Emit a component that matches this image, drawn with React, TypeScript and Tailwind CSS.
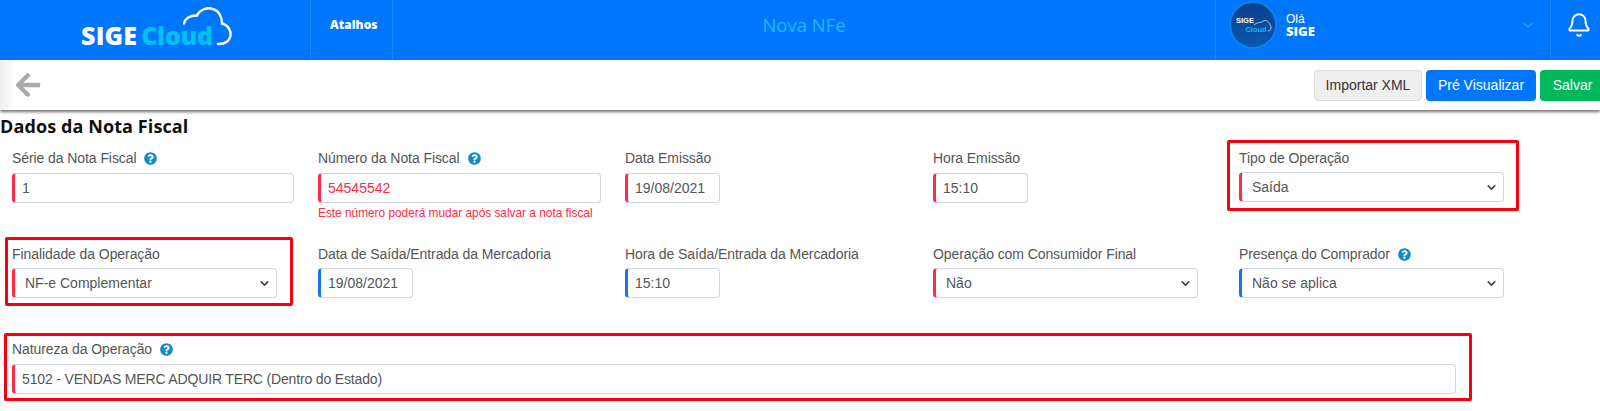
import { ReactNode } from "react";
import { FaArrowLeft, FaQuestionCircle } from "react-icons/fa";
import { Bell, ChevronDown } from "lucide-react";

function Help() {
  return <FaQuestionCircle className="ml-[8px] text-[#0f8bc9]" size={13} />;
}

function Label({ text, help }: { text: string; help?: boolean }) {
  return (
    <div className="flex h-[18px] items-center text-[14px] leading-[18px] tracking-[-0.08px] text-[#555]">
      {text}
      {help && <Help />}
    </div>
  );
}

function TextBox({ value, w, accent, red, low, tight }: { value: string; w: string; accent: "red" | "blue"; red?: boolean; low?: boolean; tight?: boolean }) {
  return (
    <input
      readOnly
      value={value}
      className={`${w} ${accent === "red" ? "border-l-[#ff2b45]" : "border-l-[#1a73f5]"} ${red ? "text-[#ff2b45]" : "text-[#555]"} ${low ? "mt-[6px]" : "mt-[5px]"} ${tight ? "tracking-[-0.16px]" : ""} block h-[30px] rounded-[4px] border border-l-[3px] border-[#d3d6da] bg-white pl-[7px] text-[14px] outline-none`}
    />
  );
}

function SelectBox({ value, accent }: { value: string; accent: "red" | "blue" }) {
  return (
    <div className="relative mt-[5px] w-[265px]">
      <select
        value={value}
        onChange={() => {}}
        className={`${accent === "red" ? "border-l-[#ff2b45]" : "border-l-[#1a73f5]"} block h-[30px] w-full appearance-none rounded-[4px] border border-l-[3px] border-[#d3d6da] bg-white pl-[10px] text-[14px] text-[#555] outline-none`}
      >
        <option>{value}</option>
      </select>
      <ChevronDown className="pointer-events-none absolute top-[9px] right-[6px] text-[#444]" size={13} strokeWidth={3} />
    </div>
  );
}

function RedBox({ className }: { className: string }) {
  return <div className={`pointer-events-none absolute rounded-[2px] border-[3px] border-[#f5000f] ${className}`} />;
}

function Field({ children, box }: { children: ReactNode; box?: string }) {
  return (
    <div className="relative">
      {children}
      {box && <RedBox className={box} />}
    </div>
  );
}

function Logo() {
  return (
    <div className="relative ml-[81px] flex h-[60px] w-[230px] items-start pt-[20px] font-['Open_Sans',sans-serif] text-[25px] leading-[30px] font-extrabold">
      <span className="tracking-[0.2px] text-white">SIGE</span>
      <span className="ml-[4px] tracking-[-0.3px] text-[#00c2f3]">Cloud</span>
      <svg className="absolute top-0 left-[-81px]" width="240" height="60" viewBox="0 0 240 60" fill="none">
        <path
          d="M184 23.500C185 18 191 15 197 15.500C200 9 208 7 213 9C219 11 222 17 222 23.500C228 25 231.500 31 230.500 36C229.500 41 225 44 218 44"
          stroke="white"
          strokeWidth="2.400"
          strokeLinecap="round"
        />
      </svg>
    </div>
  );
}

function Avatar() {
  return (
    <div className="relative flex h-[48px] w-[48px] flex-col items-center justify-center rounded-full border-2 border-[#0a84e8] bg-gradient-to-b from-[#0b3f8f] to-[#0a58b0] text-[7.500px] leading-[9px] font-bold">
      <span className="mr-[16px] text-white">SIGE</span>
      <span className="ml-[6px] text-[#19b6ee]">Cloud</span>
      <svg className="absolute top-[15px] left-[22px]" width="20" height="16" viewBox="0 0 20 16" fill="none">
        <path d="M1 7C4 4 7 5 9 4C12 1 16 3 17 7C19 9 18 13 15 13" stroke="#cfe6fb" strokeWidth="0.800" />
      </svg>
    </div>
  );
}

export default function App() {
  return (
    <div className="h-[411px] w-[1600px] overflow-hidden bg-white font-['Liberation_Sans',Arial,sans-serif]">
      <header className="flex h-[60px] bg-[#0076ff] text-white">
        <div className="w-[311px] shrink-0 border-r border-[#1b85ff]">
          <Logo />
        </div>
        <div className="w-[82px] shrink-0 border-r border-[#1b85ff] pt-[16px] pl-[19px] font-['Open_Sans',sans-serif] text-[12px] leading-[18px] font-extrabold">
          Atalhos
        </div>
        <div className="flex-1 pt-[12px] text-center font-['Open_Sans',sans-serif] text-[18.500px] leading-[26px] text-[#20b8ff]">
          Nova NFe
        </div>
        <div className="flex w-[336px] shrink-0 items-start border-x border-[#1b85ff] pt-[1px] pl-[13px]">
          <Avatar />
          <div className="mt-[12px] ml-[9px]">
            <div className="text-[12px] leading-[12px]">Olá</div>
            <div className="font-['Open_Sans',sans-serif] text-[13px] leading-[12px] font-extrabold">SIGE</div>
          </div>
          <ChevronDown className="mt-[16px] mr-[14px] ml-auto text-[#1aa8f5]" size={16} />
        </div>
        <div className="flex w-[49px] shrink-0 justify-center pt-[12px] pl-[6px]">
          <Bell size={26} strokeWidth={1.8} />
        </div>
      </header>

      <div className="relative flex h-[50px] items-center justify-between bg-gradient-to-r from-[#f0f0f0] from-0% to-white to-[1%] pl-[14px] shadow-[0_2px_3px_rgba(0,0,0,0.55)]">
        <FaArrowLeft size={28} className="text-[#a9a9a9]" />
        <div className="flex gap-[4px] pt-[1px] text-[14px]">
          <button className="h-[31px] w-[108px] rounded-[4px] border border-[#dcdcdc] bg-[#efefef] text-[#333]">Importar XML</button>
          <button className="h-[31px] w-[110px] rounded-[4px] bg-[#0076ff] text-white">Pré Visualizar</button>
          <button className="h-[31px] w-[60px] rounded-l-[4px] bg-[#00b85c] pl-[5px] text-white">Salvar</button>
        </div>
      </div>

      <h2 className="mt-[5px] font-['Open_Sans',sans-serif] text-[18px] leading-[22px] font-bold tracking-[0.1px] text-[#111]">
        Dados da Nota Fiscal
      </h2>

      <div className="mt-[12px] grid grid-cols-[306px_307px_308px_306px_265px] grid-rows-[96px_95px_auto] pl-[12px]">
        <Field>
          <Label text="Série da Nota Fiscal" help />
          <TextBox value="1" w="w-[282px]" accent="red" low />
        </Field>
        <Field>
          <Label text="Número da Nota Fiscal" help />
          <TextBox value="54545542" w="w-[283px]" accent="red" red low />
          <p className="mt-[3px] text-[11.850px] leading-[14px] text-[#ff2b45]">Este número poderá mudar após salvar a nota fiscal</p>
        </Field>
        <Field>
          <Label text="Data Emissão" />
          <TextBox value="19/08/2021" w="w-[95px]" accent="red" low />
        </Field>
        <Field>
          <Label text="Hora Emissão" />
          <TextBox value="15:10" w="w-[95px]" accent="red" low />
        </Field>
        <Field box="-top-[9px] -left-[12px] h-[71px] w-[292px]">
          <Label text="Tipo de Operação" />
          <SelectBox value="Saída" accent="red" />
        </Field>

        <Field box="-top-[8px] -left-[7px] w-[288px] h-[69px]">
          <Label text="Finalidade da Operação" />
          <SelectBox value="NF-e Complementar" accent="red" />
        </Field>
        <Field>
          <Label text="Data de Saída/Entrada da Mercadoria" />
          <TextBox value="19/08/2021" w="w-[95px]" accent="blue" />
        </Field>
        <Field>
          <Label text="Hora de Saída/Entrada da Mercadoria" />
          <TextBox value="15:10" w="w-[95px]" accent="blue" />
        </Field>
        <Field>
          <Label text="Operação com Consumidor Final" />
          <SelectBox value="Não" accent="red" />
        </Field>
        <Field>
          <Label text="Presença do Comprador" help />
          <SelectBox value="Não se aplica" accent="blue" />
        </Field>

        <div className="relative col-span-5">
          <Label text="Natureza da Operação" help />
          <TextBox value="5102 - VENDAS MERC ADQUIR TERC (Dentro do Estado)" w="w-[1444px]" accent="red" low tight />
          <RedBox className="-top-[7px] -left-[8px] h-[68px] w-[1468px]" />
        </div>
      </div>
    </div>
  );
}
